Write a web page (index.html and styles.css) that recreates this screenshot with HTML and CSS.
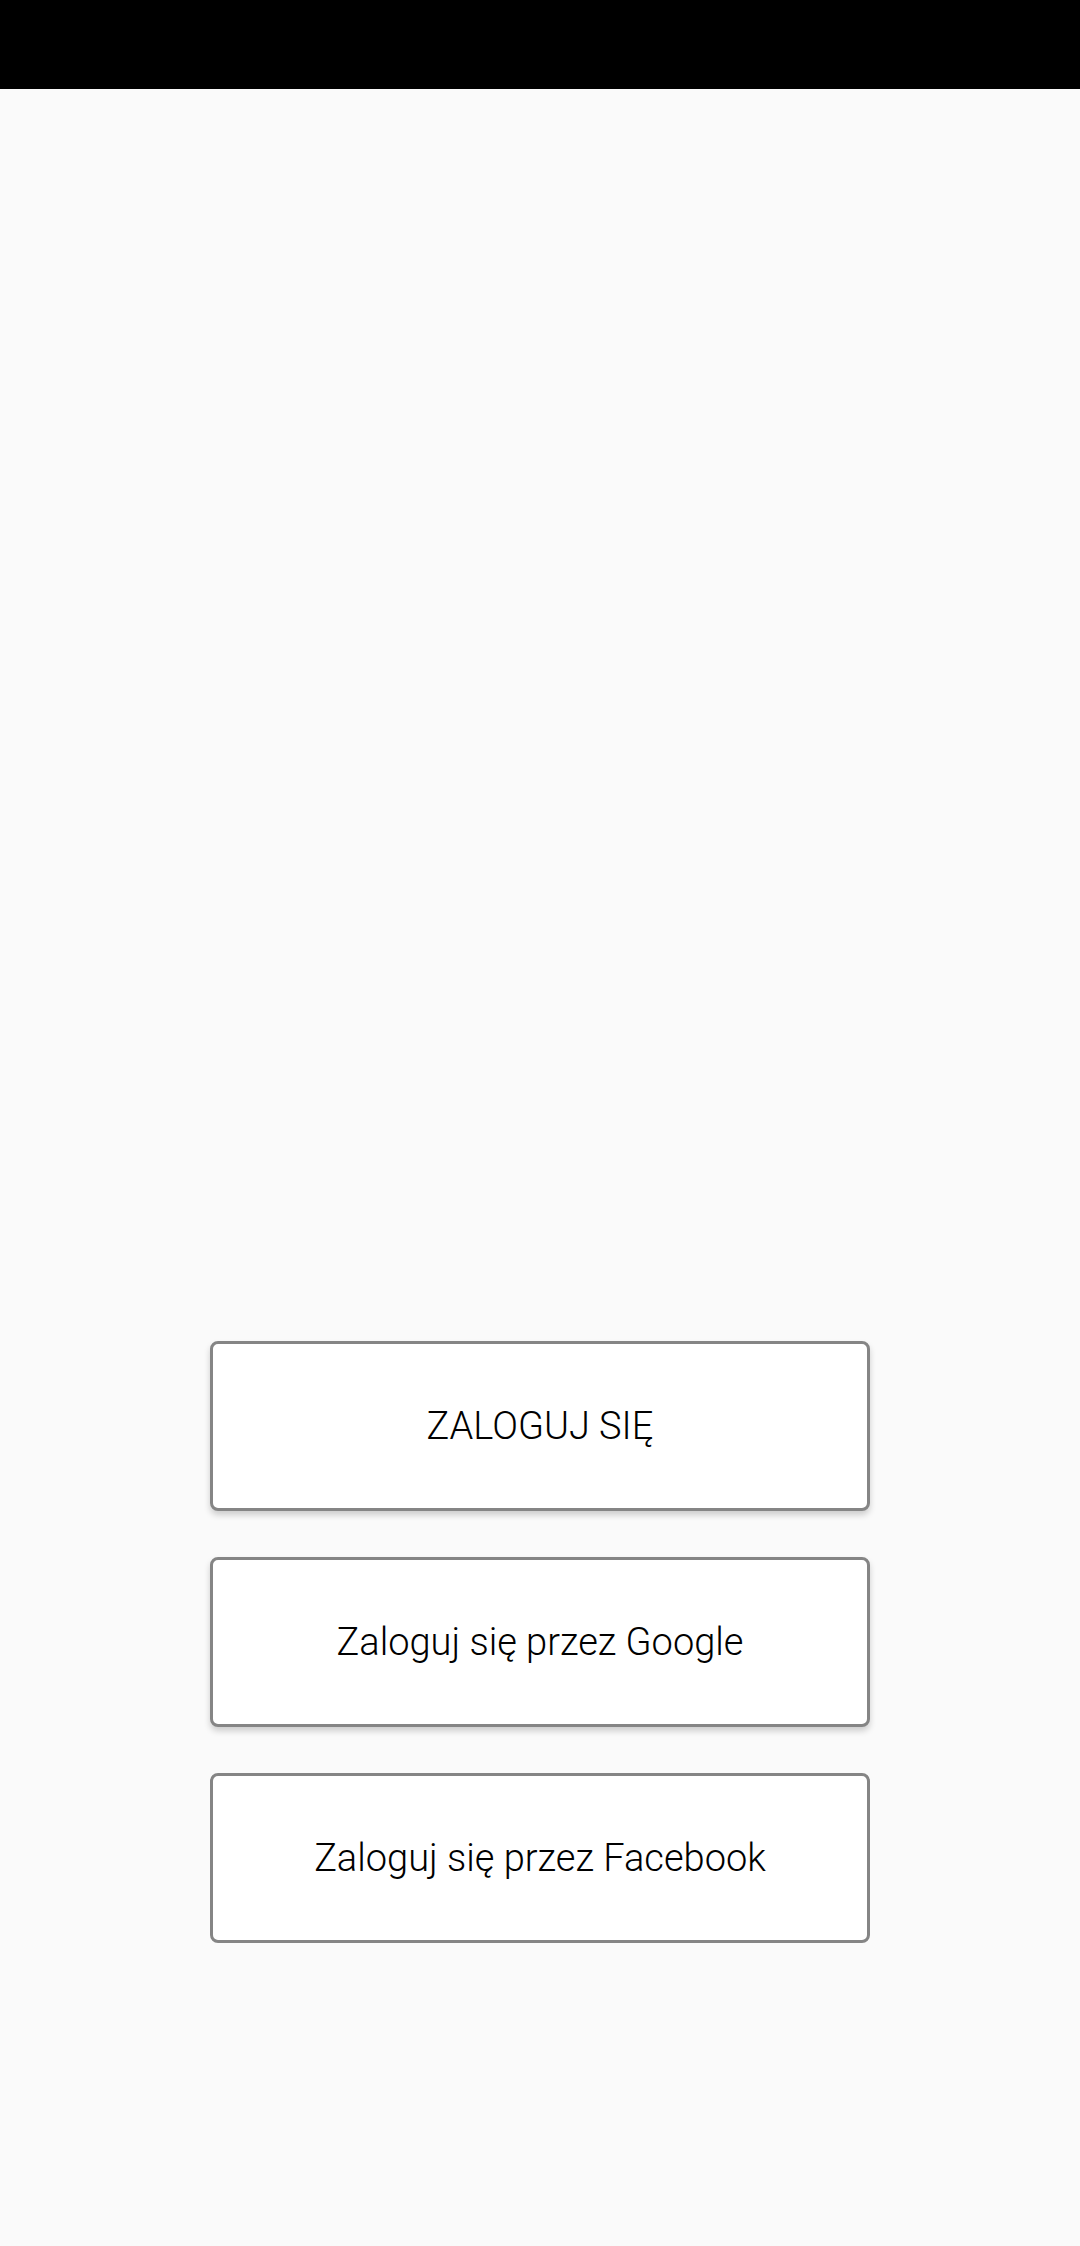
FILE: index.html
```html
<!DOCTYPE html>
<html lang="pl">
<head>
<meta charset="utf-8">
<link rel="stylesheet" href="styles.css">
</head>
<body>
<div class="statusbar"></div>
<main class="screen">
  <div class="actions">
    <button class="btn btn-raised">ZALOGUJ SIĘ</button>
    <button class="btn btn-raised">Zaloguj się przez Google</button>
    <button class="btn">Zaloguj się przez Facebook</button>
  </div>
</main>
</body>
</html>
```
FILE: styles.css
```css
html, body {
  margin: 0;
  padding: 0;
  background: #fafafa;
}
body {
  width: 1080px;
  height: 2246px;
  overflow: hidden;
  font-family: Roboto, "Noto Sans", sans-serif;
}
.statusbar {
  height: 89px;
  background: #000;
}
.screen {
  display: flex;
  justify-content: center;
  padding-top: 1252px;
}
.actions {
  display: flex;
  flex-direction: column;
  gap: 46px;
  width: 660px;
}
.btn {
  box-sizing: border-box;
  height: 170px;
  width: 660px;
  background: #fff;
  border: 3px solid #858585;
  border-radius: 8px;
  font-family: Roboto, sans-serif;
  font-weight: 300;
  font-size: 38px;
  color: #000;
  padding: 0;
  display: flex;
  align-items: center;
  justify-content: center;
}
.btn-raised {
  box-shadow: 0 4px 6px rgba(0, 0, 0, 0.18);
}
```
